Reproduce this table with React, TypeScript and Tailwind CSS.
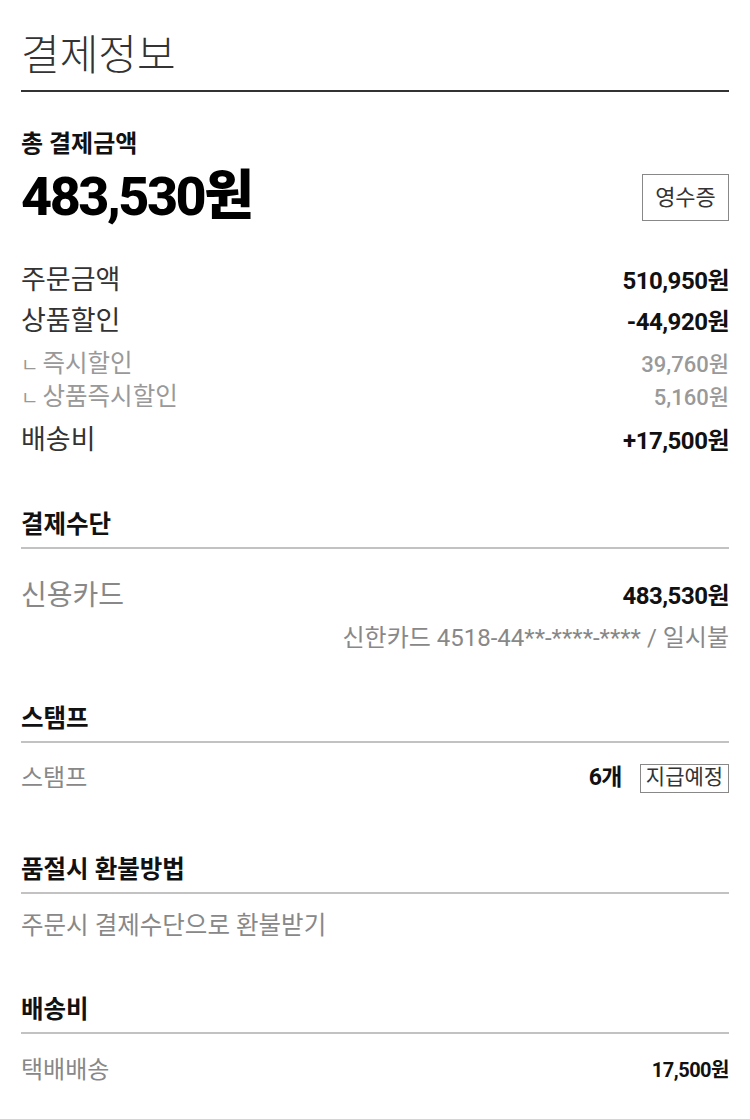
const FONT = "font-['Roboto','Noto_Sans_CJK_KR',sans-serif]";

const SUMMARY = [
  { label: "주문금액", value: "510,950원" },
  { label: "상품할인", value: "-44,920원" },
];

const DISCOUNTS = [
  { label: "즉시할인", value: "39,760원" },
  { label: "상품즉시할인", value: "5,160원" },
];

function SectionTitle({ children, className }: { children: React.ReactNode; className?: string }) {
  return (
    <h3
      className={`border-b-2 border-[#c2c2c2] pb-[9px] text-[24.5px] font-bold leading-[26px] text-[#111] ${className ?? ""}`}
    >
      {children}
    </h3>
  );
}

function SummaryRow({ label, value }: { label: string; value: string }) {
  return (
    <div className="flex h-[41px] items-center justify-between">
      <span className="text-[27px] text-[#333]">{label}</span>
      <span className="text-[24px] font-bold tracking-[-0.5px] text-[#111]">{value}</span>
    </div>
  );
}

export default function App() {
  return (
    <div className={`w-[750px] bg-white px-[21px] pb-[31px] ${FONT}`}>
      {/* Title */}
      <h2 className="border-b-2 border-[#333] pb-[10px] pt-[32px] text-[42px] font-light leading-[48px] text-[#333]">
        결제정보
      </h2>

      {/* Total */}
      <p className="mt-[39px] text-[24px] font-bold leading-[26px] text-[#111]">총 결제금액</p>
      <div className="mt-[12px] flex h-[56px] items-center justify-between">
        <span className="text-[54px] font-extrabold leading-[56px] tracking-[-2.5px] text-black">483,530원</span>
        <button className="flex h-[47px] w-[87px] items-center justify-center border border-[#888] text-[22px] text-[#333]">
          영수증
        </button>
      </div>

      {/* Breakdown */}
      <div className="mt-[35px]">
        {SUMMARY.map((r) => (
          <SummaryRow key={r.label} {...r} />
        ))}
        <div className="pb-[6px] pt-[6px]">
          {DISCOUNTS.map((d) => (
            <div key={d.label} className="flex h-[33px] items-center justify-between text-[#999]">
              <span className="text-[24.5px]">
                <span className="mr-[4px] text-[19px]">ㄴ</span>
                {d.label}
              </span>
              <span className="text-[22px] font-medium">{d.value}</span>
            </div>
          ))}
        </div>
        <SummaryRow label="배송비" value="+17,500원" />
      </div>

      {/* Payment method */}
      <SectionTitle className="mt-[51px]">결제수단</SectionTitle>
      <div className="mt-[29px] flex h-[36px] items-center justify-between">
        <span className="text-[28px] text-[#888]">신용카드</span>
        <span className="text-[24px] font-bold tracking-[-0.5px] text-[#111]">483,530원</span>
      </div>
      <p className="mt-[10px] text-right text-[24px] leading-[28px] text-[#888]">
        신한카드 4518-44**-****-**** / 일시불
      </p>

      {/* Stamp */}
      <SectionTitle className="mt-[54px]">스탬프</SectionTitle>
      <div className="mt-[17px] flex h-[36px] items-center justify-between">
        <span className="text-[24px] text-[#888]">스탬프</span>
        <div className="flex items-center gap-[18px]">
          <span className="text-[23px] font-bold tracking-[-0.5px] text-[#111]">6개</span>
          <span className="flex h-[29px] w-[89px] items-center justify-center border border-[#888] text-[21px] text-[#333]">
            지급예정
          </span>
        </div>
      </div>

      {/* Refund */}
      <SectionTitle className="mt-[61px]">품절시 환불방법</SectionTitle>
      <p className="mt-[14px] text-[24.5px] leading-[36px] text-[#888]">주문시 결제수단으로 환불받기</p>

      {/* Shipping */}
      <SectionTitle className="mt-[53px]">배송비</SectionTitle>
      <div className="mt-[18px] flex h-[36px] items-center justify-between">
        <span className="text-[24px] text-[#888]">택배배송</span>
        <span className="text-[20px] font-bold tracking-[-0.5px] text-[#111]">17,500원</span>
      </div>
    </div>
  );
}
